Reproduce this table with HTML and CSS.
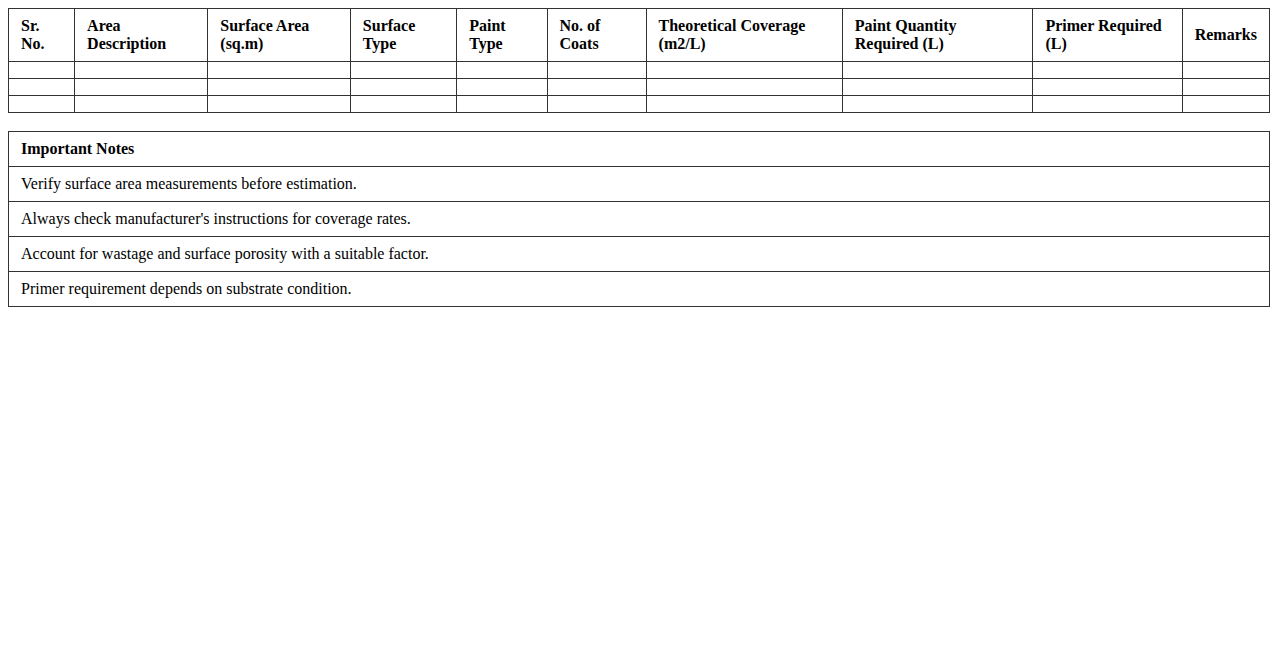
FILE: index.html
```html
<!DOCTYPE html>
<html>
<head>
<meta charset="utf-8">
<link rel="stylesheet" href="styles.css">
</head>
<body>
<table class="grid">
  <thead>
    <tr>
      <th>Sr. No.</th>
      <th>Area Description</th>
      <th>Surface Area (sq.m)</th>
      <th>Surface Type</th>
      <th>Paint Type</th>
      <th>No. of Coats</th>
      <th>Theoretical Coverage (m2/L)</th>
      <th>Paint Quantity Required (L)</th>
      <th>Primer Required (L)</th>
      <th>Remarks</th>
    </tr>
  </thead>
  <tbody>
    <tr><td></td><td></td><td></td><td></td><td></td><td></td><td></td><td></td><td></td><td></td></tr>
    <tr><td></td><td></td><td></td><td></td><td></td><td></td><td></td><td></td><td></td><td></td></tr>
    <tr><td></td><td></td><td></td><td></td><td></td><td></td><td></td><td></td><td></td><td></td></tr>
  </tbody>
</table>
<table class="grid notes">
  <thead>
    <tr><th>Important Notes</th></tr>
  </thead>
  <tbody>
    <tr><td>Verify surface area measurements before estimation.</td></tr>
    <tr><td>Always check manufacturer's instructions for coverage rates.</td></tr>
    <tr><td>Account for wastage and surface porosity with a suitable factor.</td></tr>
    <tr><td>Primer requirement depends on substrate condition.</td></tr>
  </tbody>
</table>
</body>
</html>
```
FILE: styles.css
```css
body {
  margin: 8px;
  font-family: "Liberation Serif", "Times New Roman", serif;
  font-size: 16px;
  color: #000;
  background: #fff;
}
.grid {
  width: 100%;
  border-collapse: collapse;
}
.grid th,
.grid td {
  border: 1px solid #333;
  padding: 8px 12px;
  text-align: left;
  vertical-align: middle;
}
.grid th {
  font-weight: bold;
}
.notes {
  margin-top: 18px;
}
```
